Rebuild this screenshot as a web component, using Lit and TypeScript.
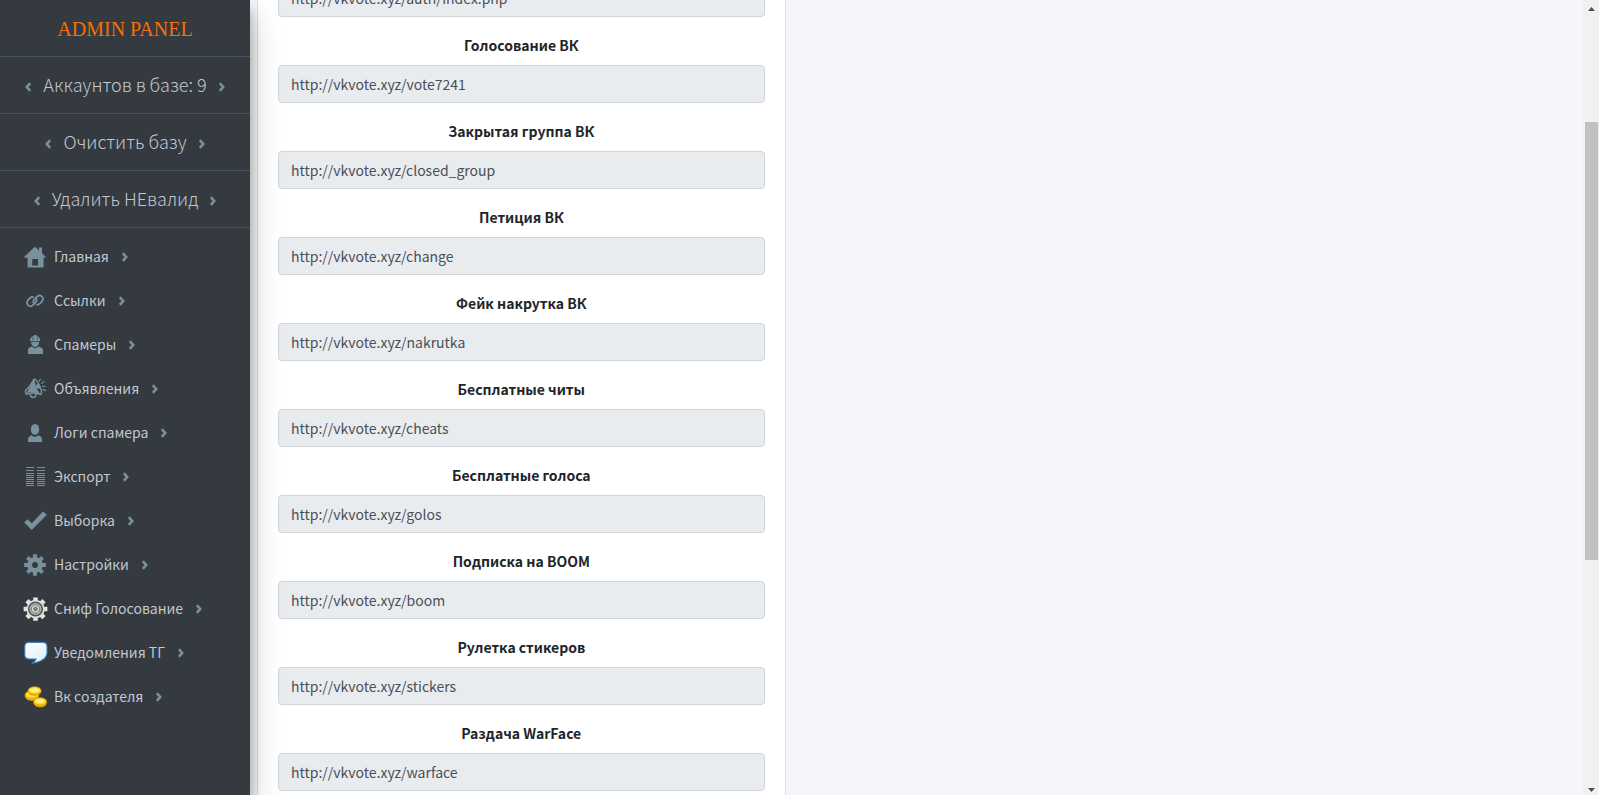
import { LitElement, html, svg, css, TemplateResult } from "lit";
import { customElement } from "lit/decorators.js";

interface MenuItem {
  label: string;
  icon: TemplateResult;
}

interface LinkField {
  id: string;
  title: string;
  url: string;
}

const home = svg`<path fill="#78919d" fill-rule="evenodd" d="M12.5 2 L16 5.4 V2.6 H19 V8.2 L22.6 11.8 V12.8 H20.6 V22.6 H4.6 V12.8 H1.4 V11.8 L11 2.4 Z M9.3 14 V20.6 H15 V14 Z"/>`;

const link = svg`<g fill="none" stroke="#78919d" stroke-width="1.8" stroke-linecap="round">
  <path d="M9.8 8 L8.6 8 Q7.6 8.2 5 11.2 Q3.2 13.6 4.6 15.6 Q6.8 18.2 9.6 16.4 L12.8 13.2 Q14.6 10.8 12.8 8.8"/>
  <path d="M13.8 15.6 L15.4 15.6 Q16.4 15.4 19 12.4 Q20.8 10 19.4 8 Q17.2 5.4 14.4 7.2 L11.2 10.4 Q9.4 12.8 11.2 14.8"/>
</g>`;

const worker = svg`<g fill="#78919d">
  <path d="M6.8 8 Q7.2 3.6 10.8 2.9 V2 H13.6 V2.9 Q17 3.6 17.4 8 Z"/>
  <path d="M8 8.8 H16.2 Q16 13 12.1 14.2 Q8.2 13 8 8.8 Z"/>
  <path d="M5 21 V16.6 Q5.2 14.6 9 13.6 L12.1 15.6 L15.2 13.6 Q19.4 14.6 20 16.6 V21 Z"/>
  <path d="M10 4 L9.6 7 M14.2 4 L14.6 7" stroke="#343a40" stroke-width=".6"/>
</g>`;

const megaphone = svg`<g fill="none" stroke="#78919d" stroke-width="1.5" stroke-linecap="round">
  <path d="M10.6 2.8 Q6.4 10.4 2.6 13.2 Q1.8 15 3.4 17" />
  <path d="M11 3.6 Q8.4 9.6 5 14.8 Q9 14 13.8 16 Q11.8 10 11 3.6 Z" fill="#78919d"/>
  <path d="M10.8 2.4 Q13.4 1.6 16.4 8.6 Q19.8 15.6 18 17.2 Q16 17.8 13 11.6"/>
  <path d="M3.4 17.2 Q8.6 15 17.6 17.2"/>
  <path d="M7.2 17.4 Q7.4 20.4 10.2 20.4 Q12.8 20.4 13 17.6"/>
  <circle cx="15.2" cy="9.4" r="1.7" fill="#78919d"/>
  <path d="M16.4 4.2 L17.2 2.4 M18.8 6.4 L20.8 4.4 M19.8 9.4 H22 M20 12.4 L22.6 13.6" stroke-width="1.2"/>
</g>`;

const person = svg`<g fill="#78919d">
  <ellipse cx="12" cy="8.4" rx="4.2" ry="5.4"/>
  <path d="M5 21 V18 Q5.2 15.4 8.6 14.2 Q12 17.2 15.4 14.2 Q18.8 15.4 19 18 V21 Z"/>
</g>`;

const columns = svg`<path stroke="#78919d" stroke-width="1" d="${[2, 5, 8, 10, 12, 14, 16, 18, 20]
  .map((y) => `M3 ${y + 0.5}H11M14 ${y + 0.5}H22`)
  .join("")}"/>`;

const check = svg`<path fill="#78919d" d="M1.2 13.6 L4.6 10.2 L8.8 14.2 L20 2.6 L23.8 5.8 L8.8 21 Z"/>`;

const cog = svg`<g>
  <circle cx="12" cy="12" r="5.4" fill="none" stroke="#78919d" stroke-width="5"/>
  <g stroke="#78919d" stroke-width="3.8">
    <path d="M12 1.2V5M12 19V22.8M1.2 12H5M19 12H22.8M4.4 4.4L7.2 7.2M16.8 16.8L19.6 19.6M4.4 19.6L7.2 16.8M16.8 7.2L19.6 4.4"/>
  </g>
</g>`;

const metalCog = svg`<g>
  <g stroke="#e4e4e2" stroke-width="4.6">
    <path d="M12.5 0.4V5M12.5 19V23.8M0.6 12H6M19 12H24.4M4 3.6L8 7.6M17 16.6L21 20.6M4 20.6L8 16.6M17 7.6L21 3.6"/>
  </g>
  <circle cx="12.5" cy="12" r="9.2" fill="#dededc"/>
  <circle cx="12.5" cy="12" r="6.8" fill="#b4b4b2" stroke="#555" stroke-width="1.5"/>
  <circle cx="12.5" cy="12" r="4.2" fill="#dcdcda" stroke="#777" stroke-width="1"/>
  <circle cx="12.5" cy="12" r="1.9" fill="#888" stroke="#666" stroke-width=".8"/>
</g>`;

const bubble = svg`<defs><linearGradient id="air" x1="0" y1="0" x2="1" y2="1">
    <stop offset="0" stop-color="#fff"/><stop offset="1" stop-color="#dcecf9"/>
  </linearGradient></defs>
  <path fill="url(#air)" stroke="#3d7fbd" stroke-width="1.1" stroke-linejoin="round" d="M5.8 1.4 H19.8 Q24 1.4 24 5.2 V12.2 Q23.6 17 17.4 20 Q13 22 9.2 22.2 Q12.6 20 13.2 18 H6 Q1.8 17.8 1.8 13.8 V5.2 Q1.8 1.4 5.8 1.4 Z"/>`;

const coins = svg`<g stroke="#d89b00" stroke-width=".7">
  <path fill="#f3b70c" d="M2.2 9.4 V12 Q3.6 15.6 9 15.4 Q15 15 15.6 11.6 V9 Z"/>
  <ellipse cx="8.9" cy="9.6" rx="6.6" ry="3.8" fill="#ffdc38"/>
  <path fill="#f3b70c" d="M5.2 5.4 V7.4 Q6.6 10.4 11.8 10.2 Q17.4 9.8 18 7 V5 Z"/>
  <ellipse cx="11.6" cy="5.4" rx="6.4" ry="3.6" fill="#ffe24a"/>
  <ellipse cx="11.6" cy="5.3" rx="3.6" ry="1.7" fill="#fff08a" stroke="none"/>
  <path fill="#f3b70c" d="M10.8 16 V18.6 Q12.2 22.2 17.4 22 Q22.8 21.6 23.4 18.4 V16 Z"/>
  <ellipse cx="17.1" cy="16.4" rx="6.3" ry="3.7" fill="#ffdc38"/>
  <ellipse cx="17.1" cy="16.2" rx="3.6" ry="1.7" fill="#fff08a" stroke="none"/>
</g>`;

const MENU: MenuItem[] = [
  { label: "Главная", icon: home },
  { label: "Ссылки", icon: link },
  { label: "Спамеры", icon: worker },
  { label: "Объявления", icon: megaphone },
  { label: "Логи спамера", icon: person },
  { label: "Экспорт", icon: columns },
  { label: "Выборка", icon: check },
  { label: "Настройки", icon: cog },
  { label: "Сниф Голосование", icon: metalCog },
  { label: "Уведомления ТГ", icon: bubble },
  { label: "Вк создателя", icon: coins },
];

const ACTIONS = ["Аккаунтов в базе: 9", "Очистить базу", "Удалить НЕвалид"];

const LINKS: LinkField[] = [
  { id: "vote", title: "Голосование ВК", url: "http://vkvote.xyz/vote7241" },
  { id: "closed", title: "Закрытая группа ВК", url: "http://vkvote.xyz/closed_group" },
  { id: "change", title: "Петиция ВК", url: "http://vkvote.xyz/change" },
  { id: "nakrutka", title: "Фейк накрутка ВК", url: "http://vkvote.xyz/nakrutka" },
  { id: "cheats", title: "Бесплатные читы", url: "http://vkvote.xyz/cheats" },
  { id: "golos", title: "Бесплатные голоса", url: "http://vkvote.xyz/golos" },
  { id: "boom", title: "Подписка на BOOM", url: "http://vkvote.xyz/boom" },
  { id: "stickers", title: "Рулетка стикеров", url: "http://vkvote.xyz/stickers" },
  { id: "warface", title: "Раздача WarFace", url: "http://vkvote.xyz/warface" },
];

const chevron = (left = false) => html`<svg class="chevron" viewBox="0 0 6 10" aria-hidden="true">
  <path d=${left ? "M5.2 1.2L1.8 5L5.2 8.8" : "M0.8 1.2L4.2 5L0.8 8.8"} fill="none" stroke="#78919d" stroke-width="2.6" />
</svg>`;

@customElement("side-menu")
export class SideMenu extends LitElement {
  static styles = css`
    :host {
      display: block;
      background: #343a40;
      color: #c2c7d0;
      box-shadow: 0 14px 28px rgba(0, 0, 0, 0.25), 0 10px 10px rgba(0, 0, 0, 0.22);
    }
    a {
      color: inherit;
      text-decoration: none;
    }
    .row {
      box-sizing: border-box;
      display: flex;
      align-items: center;
      justify-content: center;
      gap: 12px;
      height: 57px;
      padding-bottom: 2px;
      border-bottom: 1px solid #4b545c;
      font-size: 18px;
      font-weight: 300;
      line-height: 28px;
      white-space: nowrap;
    }
    .brand {
      padding: 2px 0 0;
      color: #f56f0a;
      font-family: "Liberation Serif", serif;
      font-size: 20px;
    }
    .menu {
      display: grid;
      gap: 4px;
      margin: 0;
      padding: 8px;
      list-style: none;
    }
    .item {
      display: flex;
      align-items: center;
      height: 40px;
      padding: 0 15px;
      font-size: 14px;
      line-height: 24px;
      white-space: nowrap;
    }
    .icon {
      width: 24px;
      height: 24px;
      margin: 2px 7px 0 0;
    }
    .chevron {
      flex: none;
      width: 6px;
      height: 10px;
      margin-top: 2px;
    }
    .row .chevron {
      margin-top: 6px;
    }
    .item .chevron {
      margin-left: 13px;
    }
  `;

  render() {
    return html`
      <a class="row brand" href="#">ADMIN PANEL</a>
      ${ACTIONS.map((text) => html`<a class="row" href="#">${chevron(true)}<span>${text}</span>${chevron()}</a>`)}
      <nav>
        <ul class="menu">
          ${MENU.map(
            (m) => html`<li>
              <a class="item" href="#">
                <svg class="icon" viewBox="0 0 24 24" overflow="visible" aria-hidden="true">${m.icon}</svg>
                <span>${m.label}</span>${chevron()}
              </a>
            </li>`
          )}
        </ul>
      </nav>
    `;
  }
}

@customElement("link-card")
export class LinkCard extends LitElement {
  static styles = css`
    :host {
      display: block;
      box-sizing: border-box;
      padding: 0 20px 20px;
      background: #fff;
      border: 1px solid #dcdfe5;
      border-top: 0;
    }
    .group {
      display: grid;
      gap: 8px;
      margin-bottom: 16px;
    }
    label {
      font-size: 14px;
      font-weight: 700;
      line-height: 24px;
      text-align: center;
      color: #212529;
    }
    input {
      box-sizing: border-box;
      width: 100%;
      height: 38px;
      margin: 0;
      padding: 6px 12px;
      border: 1px solid #ced4da;
      border-radius: 4px;
      background: #e9ecef;
      color: #495057;
      font: inherit;
      font-size: 14px;
    }
  `;

  render() {
    return html`
      <div class="group">
        <input readonly aria-label="auth" .value=${"http://vkvote.xyz/auth/index.php"} />
      </div>
      ${LINKS.map(
        (f) => html`<div class="group">
          <label for=${f.id}>${f.title}</label>
          <input id=${f.id} readonly .value=${f.url} />
        </div>`
      )}
    `;
  }
}

@customElement("scroll-track")
export class ScrollTrack extends LitElement {
  static styles = css`
    :host {
      display: flex;
      flex-direction: column;
      background: #f1f1f1;
    }
    .arrow {
      display: block;
      height: 17px;
    }
    .track {
      flex: 1;
      display: grid;
      grid-template-rows: 105fr 438fr 218fr;
      padding: 0 1px 0 2px;
    }
    .thumb {
      grid-row: 2;
      background: #c1c1c1;
    }
  `;

  render() {
    return html`
      <svg class="arrow" viewBox="0 0 16 17"><path d="M5 11L8.5 7L12 11Z" fill="#505050" /></svg>
      <div class="track"><div class="thumb"></div></div>
      <svg class="arrow" viewBox="0 0 16 17"><path d="M5 10L8.5 14L12 10Z" fill="#505050" /></svg>
    `;
  }
}

@customElement("app-root")
export class AppRoot extends LitElement {
  static styles = css`
    :host {
      display: grid;
      grid-template-columns: 250px 1fr 16px;
      height: 100vh;
      overflow: hidden;
      background: #f4f6f9;
      font-family: "Source Sans Pro", "Noto Sans CJK SC", "Noto Sans", sans-serif;
    }
    .side {
      z-index: 1;
    }
    .content {
      min-width: 0;
      overflow: hidden;
      padding: 0 7px;
    }
    .card {
      width: calc(40% + 1px);
      margin-top: -21px;
    }
  `;

  render() {
    return html`
      <side-menu class="side"></side-menu>
      <main class="content"><link-card class="card"></link-card></main>
      <scroll-track></scroll-track>
    `;
  }
}
